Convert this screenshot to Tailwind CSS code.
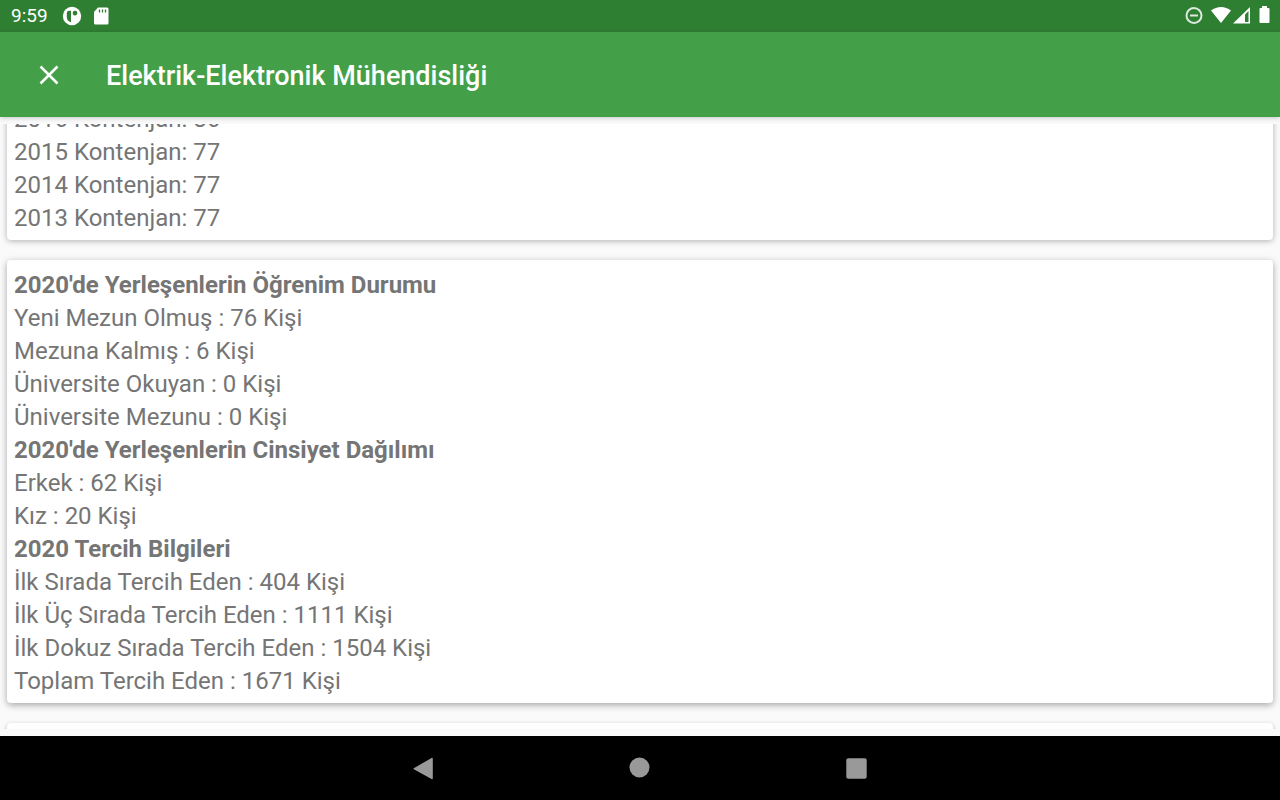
<!DOCTYPE html>
<html lang="tr">
<head>
<meta charset="utf-8">
<meta name="viewport" content="width=device-width, initial-scale=1">
<title>Elektrik-Elektronik Mühendisliği</title>
<script src="https://cdn.jsdelivr.net/npm/@tailwindcss/browser@4"></script>
</head>
<body class="flex h-screen flex-col overflow-hidden bg-[#fafafa] font-['Roboto',sans-serif] text-[#757575]">
  <div class="flex h-8 shrink-0 items-center justify-between bg-[#2f7f33] pr-[10px] pl-[11px] text-white">
    <div class="flex items-center">
      <span class="w-[38px] text-[19px] leading-8">9:59</span>
      <svg class="ml-[13px] size-5" viewBox="0 0 20 20" aria-hidden="true">
        <circle cx="10" cy="10" r="9.200" fill="#fff"/>
        <path d="M9 4.800v11.400C6.500 15.800 4.800 13.800 4.800 11V7A2.200 2.200 0 0 1 7 4.800z" fill="#2f7f33"/>
        <rect x="10.800" y="4.800" width="4.400" height="4.600" rx="1.800" fill="#2f7f33"/>
      </svg>
      <svg class="ml-[9px] size-5" viewBox="0 0 20 20" aria-hidden="true">
        <path d="M7 1.500H16a1.500 1.500 0 0 1 1.500 1.500v14A1.500 1.500 0 0 1 16 18.500H4.500A1.500 1.500 0 0 1 3 17V6z" fill="#fff"/>
        <path d="M8.500 3.500v3M11.500 3.500v3M14.500 3.500v3" stroke="#2f7f33" stroke-width="1.300"/>
      </svg>
    </div>
    <div class="flex items-center">
      <svg class="h-5 w-[18px]" viewBox="0 0 18 20" fill="none" stroke="#dcebdd" stroke-width="2" aria-hidden="true">
        <circle cx="9" cy="9.500" r="7.500"/><path d="M5 9.500h8"/>
      </svg>
      <svg class="ml-2 h-5 w-5" viewBox="0 0 20 20" fill="#fff" aria-hidden="true">
        <path d="M0 4.500C6-.2 14-.2 20 4.500L10 17z"/>
      </svg>
      <svg class="ml-[2px] h-5 w-[17px]" viewBox="0 0 17 20" aria-hidden="true">
        <path d="M0 17.500L17 1v16.500z" fill="#fff"/><path d="M12 8.500l3.500-3.500v11H12z" fill="#2f7f33"/>
      </svg>
      <svg class="ml-[9px] h-5 w-[11px]" viewBox="0 0 11 20" fill="#fff" aria-hidden="true">
        <path d="M3 0h5v2h1.500a1 1 0 0 1 1 1v13a1 1 0 0 1-1 1h-8a1 1 0 0 1-1-1V3a1 1 0 0 1 1-1H3z"/>
      </svg>
    </div>
  </div>

  <header class="z-10 flex h-[85px] shrink-0 items-center bg-[#44a048] pl-8 text-white shadow-[0_1px_5px_rgba(0,0,0,0.2)]">
    <button type="button" aria-label="Kapat" class="flex size-[34px] items-center justify-center">
      <svg class="size-6" viewBox="0 0 24 24" fill="none" stroke="currentColor" stroke-width="2.500"><path d="M3.500 3.500l17 17M20.500 3.500l-17 17"/></svg>
    </button>
    <h1 class="ml-10 pt-[2px] text-[27px] leading-9 font-medium">Elektrik-Elektronik Mühendisliği</h1>
  </header>

  <main class="min-h-0 flex-1 py-[7px] text-2xl leading-[33px]">
    <div class="flex h-full flex-col gap-5 overflow-hidden px-[7px]">
      <section class="-mt-[30px] shrink-0 rounded bg-white px-[7px] pt-[9px] pb-[5px] shadow-[0_1px_6px_rgba(0,0,0,0.3)]">
        <p>2016 Kontenjan: 86</p>
        <p>2015 Kontenjan: 77</p>
        <p>2014 Kontenjan: 77</p>
        <p>2013 Kontenjan: 77</p>
      </section>
      <section class="shrink-0 rounded bg-white px-[7px] pt-[9px] pb-[5px] shadow-[0_2px_7px_rgba(0,0,0,0.35)]">
        <h2 class="font-bold">2020'de Yerleşenlerin Öğrenim Durumu</h2>
        <p>Yeni Mezun Olmuş : 76 Kişi</p>
        <p>Mezuna Kalmış : 6 Kişi</p>
        <p>Üniversite Okuyan : 0 Kişi</p>
        <p>Üniversite Mezunu : 0 Kişi</p>
        <h2 class="font-bold">2020'de Yerleşenlerin Cinsiyet Dağılımı</h2>
        <p>Erkek : 62 Kişi</p>
        <p>Kız : 20 Kişi</p>
        <h2 class="font-bold">2020 Tercih Bilgileri</h2>
        <p>İlk Sırada Tercih Eden : 404 Kişi</p>
        <p>İlk Üç Sırada Tercih Eden : 1111 Kişi</p>
        <p>İlk Dokuz Sırada Tercih Eden : 1504 Kişi</p>
        <p>Toplam Tercih Eden : 1671 Kişi</p>
      </section>
      <section class="h-20 shrink-0 rounded bg-white shadow-[0_2px_5px_rgba(0,0,0,0.3)]"></section>
    </div>
  </main>

  <nav class="flex h-16 shrink-0 items-center justify-center gap-[184px] bg-black text-[#999]">
    <button type="button" aria-label="Geri" class="flex size-8 items-center justify-center">
      <svg class="size-8" viewBox="0 0 32 32" fill="currentColor"><path d="M5.800 16.300L23.500 5.900q1.300-.5 1.300.9v19.400q0 1.400-1.300.9L5.800 17.200q-.7-.4 0-.9z"/></svg>
    </button>
    <button type="button" aria-label="Ana ekran" class="flex size-8 items-center justify-center">
      <svg class="size-8" viewBox="0 0 32 32" fill="currentColor"><circle cx="15.500" cy="15.500" r="10"/></svg>
    </button>
    <button type="button" aria-label="Son uygulamalar" class="flex size-8 items-center justify-center">
      <svg class="size-8" viewBox="0 0 32 32" fill="currentColor"><rect x="6.300" y="6.300" width="20.400" height="20.400" rx="2"/></svg>
    </button>
  </nav>
</body>
</html>
